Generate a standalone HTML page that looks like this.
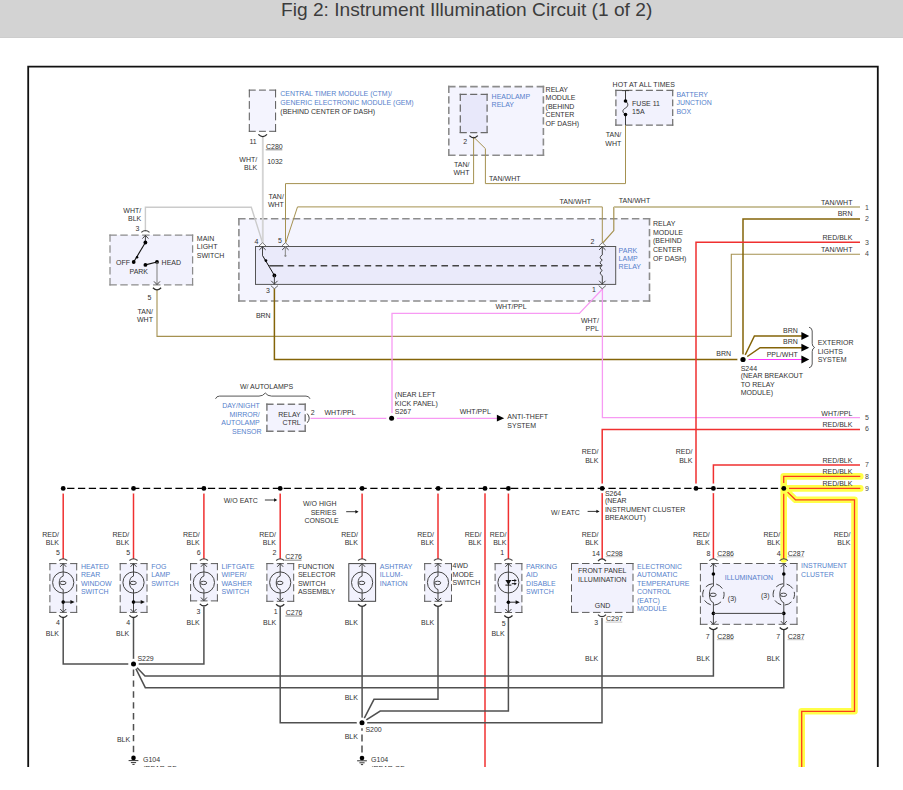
<!DOCTYPE html>
<html><head><meta charset="utf-8"><title>Fig 2</title>
<style>
html,body{margin:0;padding:0;background:#fff;}
body{width:903px;height:790px;overflow:hidden;position:relative;font-family:"Liberation Sans",sans-serif;}
#hdr{position:absolute;left:0;top:0;width:903px;height:36.6px;background:#d3d3d3;border-bottom:1px solid #cdcdcd;}
#ttl{position:absolute;left:281px;top:-2.6px;font-size:19.15px;line-height:26px;color:#3c3c3c;white-space:nowrap;}
#dia{position:absolute;left:0;top:0;width:903px;height:767px;overflow:hidden;}
svg text{font-family:"Liberation Sans",sans-serif;font-size:7.0px;}
</style></head><body>
<div id="hdr"></div><div id="ttl">Fig 2: Instrument Illumination Circuit (1 of 2)</div>
<div id="dia"><svg width="903" height="790" viewBox="0 0 903 790">
<path d="M28.2,767 V66.6 H877.8 V767" fill="none" stroke="#111" stroke-width="1.8"/>
<rect x="249.3" y="90.1" width="26.3" height="41.2" fill="#f4f4fe"/>
<path d="M248.8,90.1 L276.1,90.1" stroke="#585858" stroke-width="1.0" fill="none" stroke-dasharray="6.941 3.239"/>
<path d="M248.8,131.3 L276.1,131.3" stroke="#585858" stroke-width="1.0" fill="none" stroke-dasharray="6.941 3.239"/>
<path d="M249.3,89.6 L249.3,131.8" stroke="#585858" stroke-width="1.0" fill="none" stroke-dasharray="7.815 3.647"/>
<path d="M275.6,89.6 L275.6,131.8" stroke="#585858" stroke-width="1.0" fill="none" stroke-dasharray="7.815 3.647"/>
<rect x="448.8" y="86.6" width="94.6" height="68.7" fill="#f4f4fe"/>
<path d="M448.0,86.6 L544.2,86.6" stroke="#8c8c8c" stroke-width="1.6" fill="none" stroke-dasharray="7.555 3.526"/>
<path d="M448.0,155.3 L544.2,155.3" stroke="#8c8c8c" stroke-width="1.6" fill="none" stroke-dasharray="7.555 3.526"/>
<path d="M448.8,85.8 L448.8,156.1" stroke="#8c8c8c" stroke-width="1.6" fill="none" stroke-dasharray="7.173 3.348"/>
<path d="M543.4,85.8 L543.4,156.1" stroke="#8c8c8c" stroke-width="1.6" fill="none" stroke-dasharray="7.173 3.348"/>
<rect x="460.3" y="94.4" width="26.8" height="38.1" fill="#e8e8fa"/>
<path d="M459.68,94.4 L487.73,94.4" stroke="#6a6a6a" stroke-width="1.25" fill="none" stroke-dasharray="7.131 3.328"/>
<path d="M459.68,132.5 L487.73,132.5" stroke="#6a6a6a" stroke-width="1.25" fill="none" stroke-dasharray="7.131 3.328"/>
<path d="M460.3,93.78 L460.3,133.12" stroke="#6a6a6a" stroke-width="1.25" fill="none" stroke-dasharray="7.287 3.401"/>
<path d="M487.1,93.78 L487.1,133.12" stroke="#6a6a6a" stroke-width="1.25" fill="none" stroke-dasharray="7.287 3.401"/>
<rect x="615.9" y="90.3" width="56.8" height="34.9" fill="#f2f2fd"/>
<path d="M615.27,90.3 L673.33,90.3" stroke="#707070" stroke-width="1.25" fill="none" stroke-dasharray="6.966 3.251"/>
<path d="M615.27,125.2 L673.33,125.2" stroke="#707070" stroke-width="1.25" fill="none" stroke-dasharray="6.966 3.251"/>
<path d="M615.9,89.67 L615.9,125.83" stroke="#707070" stroke-width="1.25" fill="none" stroke-dasharray="6.694 3.124"/>
<path d="M672.7,89.67 L672.7,125.83" stroke="#707070" stroke-width="1.25" fill="none" stroke-dasharray="6.694 3.124"/>
<rect x="110" y="235" width="82.6" height="49.8" fill="#f2f2fd"/>
<path d="M109.38,235 L193.22,235" stroke="#8c8c8c" stroke-width="1.25" fill="none" stroke-dasharray="7.442 3.473"/>
<path d="M109.38,284.8 L193.22,284.8" stroke="#8c8c8c" stroke-width="1.25" fill="none" stroke-dasharray="7.442 3.473"/>
<path d="M110,234.38 L110,285.43" stroke="#8c8c8c" stroke-width="1.25" fill="none" stroke-dasharray="7.434 3.469"/>
<path d="M192.6,234.38 L192.6,285.43" stroke="#8c8c8c" stroke-width="1.25" fill="none" stroke-dasharray="7.434 3.469"/>
<rect x="238.9" y="218.8" width="410.6" height="82.2" fill="#f4f4fe"/>
<path d="M238.1,218.8 L650.3,218.8" stroke="#8c8c8c" stroke-width="1.6" fill="none" stroke-dasharray="7.458 3.481"/>
<path d="M238.1,301 L650.3,301" stroke="#8c8c8c" stroke-width="1.6" fill="none" stroke-dasharray="7.458 3.481"/>
<path d="M238.9,218.0 L238.9,301.8" stroke="#8c8c8c" stroke-width="1.6" fill="none" stroke-dasharray="7.438 3.471"/>
<path d="M649.5,218.0 L649.5,301.8" stroke="#8c8c8c" stroke-width="1.6" fill="none" stroke-dasharray="7.438 3.471"/>
<rect x="255.5" y="246.5" width="360.2" height="37.9" fill="#eaeafa" stroke="#555" stroke-width="1.0"/>
<rect x="266.9" y="404.3" width="38.3" height="27.0" fill="#f3f3fe"/>
<path d="M266.17,404.3 L305.93,404.3" stroke="#7a7a7a" stroke-width="1.45" fill="none" stroke-dasharray="7.361 3.435"/>
<path d="M266.17,431.3 L305.93,431.3" stroke="#7a7a7a" stroke-width="1.45" fill="none" stroke-dasharray="7.361 3.435"/>
<path d="M266.9,403.57 L266.9,432.03" stroke="#7a7a7a" stroke-width="1.45" fill="none" stroke-dasharray="7.233 3.375"/>
<path d="M305.2,403.57 L305.2,432.03" stroke="#7a7a7a" stroke-width="1.45" fill="none" stroke-dasharray="7.233 3.375"/>
<rect x="571.5" y="563.5" width="61.5" height="48.9" fill="#f2f2fd"/>
<path d="M571.0,563.5 L633.5,563.5" stroke="#5c5c5c" stroke-width="1.0" fill="none" stroke-dasharray="7.5 3.5"/>
<path d="M571.0,612.4 L633.5,612.4" stroke="#5c5c5c" stroke-width="1.0" fill="none" stroke-dasharray="7.5 3.5"/>
<path d="M571.5,563.0 L571.5,612.9" stroke="#5c5c5c" stroke-width="1.0" fill="none" stroke-dasharray="7.267 3.391"/>
<path d="M633,563.0 L633,612.9" stroke="#5c5c5c" stroke-width="1.0" fill="none" stroke-dasharray="7.267 3.391"/>
<rect x="700.4" y="563.5" width="96.6" height="60.8" fill="#f2f2fd"/>
<path d="M699.9,563.5 L797.5,563.5" stroke="#5c5c5c" stroke-width="1.0" fill="none" stroke-dasharray="7.665 3.577"/>
<path d="M699.9,624.3 L797.5,624.3" stroke="#5c5c5c" stroke-width="1.0" fill="none" stroke-dasharray="7.665 3.577"/>
<path d="M700.4,563.0 L700.4,624.8" stroke="#5c5c5c" stroke-width="1.0" fill="none" stroke-dasharray="7.416 3.461"/>
<path d="M797,563.0 L797,624.8" stroke="#5c5c5c" stroke-width="1.0" fill="none" stroke-dasharray="7.416 3.461"/>
<path d="M145.4,232 V207.3 H251.3 L262.8,243.5" stroke="#cbcbcb" stroke-width="1.4" fill="none" />
<path d="M262.8,136 V243.5" stroke="#d4d4d4" stroke-width="1.9" fill="none" />
<path d="M285.5,243.5 V183.6 H473.6 V137" stroke="#a59150" stroke-width="1.0" fill="none" />
<path d="M473.6,137 L485.4,148.6 V183.6 H625.5 V125.2" stroke="#a59150" stroke-width="1.0" fill="none" />
<path d="M285.5,243.5 L297.5,206.9 H602.3 V243.5" stroke="#a59150" stroke-width="1.0" fill="none" />
<path d="M602.3,243.5 L613.8,230.6 V206.9" stroke="#a59150" stroke-width="1.2" fill="none" />
<path d="M613.8,206.9 H860" stroke="#cac29d" stroke-width="2.0" fill="none" />
<path d="M157,290 V336.4 H731.3 V254.3 H860" stroke="#a59150" stroke-width="1.1" fill="none" />
<path d="M274.4,288.5 V359.5 H737.5" stroke="#846408" stroke-width="1.5" fill="none" />
<path d="M743,359 V219 H860" stroke="#846408" stroke-width="1.5" fill="none" />
<path d="M743,359.5 L754.4,336 H802" stroke="#846408" stroke-width="1.5" fill="none" />
<path d="M743,359.5 L760.1,347.7 H802" stroke="#846408" stroke-width="1.5" fill="none" />
<path d="M602.4,288.5 V417.6 H860" stroke="#f79af3" stroke-width="1.3" fill="none" />
<path d="M602.4,289 L579.4,313.4 H392 V413.5" stroke="#f79af3" stroke-width="1.3" fill="none" />
<path d="M310.5,418.3 H387.5 M396,418.3 H497.5" stroke="#f79af3" stroke-width="1.3" fill="none" />
<path d="M748.4,359.5 H802" stroke="#ff38ff" stroke-width="1.2" fill="none" />
<path d="M860,242.3 H696 V488" stroke="#f03030" stroke-width="1.5" fill="none" />
<path d="M860,429.5 H602.2 V559" stroke="#f03030" stroke-width="1.5" fill="none" />
<path d="M860,465 H713.4 V559" stroke="#f03030" stroke-width="1.5" fill="none" />
<path d="M63.2,493.4 V559.2" stroke="#f03030" stroke-width="1.5" fill="none" />
<path d="M133.5,493.4 V559.2" stroke="#f03030" stroke-width="1.5" fill="none" />
<path d="M203.9,493.4 V559.2" stroke="#f03030" stroke-width="1.5" fill="none" />
<path d="M280.2,493.4 V559.2" stroke="#f03030" stroke-width="1.5" fill="none" />
<path d="M362.1,493.4 V559.2" stroke="#f03030" stroke-width="1.5" fill="none" />
<path d="M438,493.4 V559.2" stroke="#f03030" stroke-width="1.5" fill="none" />
<path d="M508.4,493.4 V559.2" stroke="#f03030" stroke-width="1.5" fill="none" />
<path d="M485,493.2 V767" stroke="#f03030" stroke-width="1.5" fill="none" />
<path d="M63.2,618 V663.9 H203.9 V607" stroke="#505050" stroke-width="1.5" fill="none" />
<path d="M133.5,618 V663.9" stroke="#505050" stroke-width="1.5" fill="none" />
<path d="M133.5,663.9 L145,676 H713.4 V630" stroke="#505050" stroke-width="1.5" fill="none" />
<path d="M133.5,663.9 L145.3,687.7 H783.8 V630" stroke="#505050" stroke-width="1.5" fill="none" />
<path d="M280.2,607 V722.7 H602 V618" stroke="#505050" stroke-width="1.5" fill="none" />
<path d="M362.1,607 V722.7" stroke="#505050" stroke-width="1.5" fill="none" />
<path d="M362,722.7 L374,699.3 H438 V607" stroke="#505050" stroke-width="1.5" fill="none" />
<path d="M362,722.7 L380.2,711.1 H508.4 V618" stroke="#505050" stroke-width="1.5" fill="none" />
<circle cx="63.2" cy="488.4" r="4.9" fill="#fff"/>
<circle cx="133.5" cy="488.4" r="4.9" fill="#fff"/>
<circle cx="203.9" cy="488.4" r="4.9" fill="#fff"/>
<circle cx="280.2" cy="488.4" r="4.9" fill="#fff"/>
<circle cx="362.1" cy="488.4" r="4.9" fill="#fff"/>
<circle cx="438.2" cy="488.4" r="4.9" fill="#fff"/>
<circle cx="485" cy="488.4" r="4.9" fill="#fff"/>
<circle cx="508.4" cy="488.4" r="4.9" fill="#fff"/>
<circle cx="602.2" cy="488.4" r="4.9" fill="#fff"/>
<circle cx="696" cy="488.4" r="4.9" fill="#fff"/>
<circle cx="713.4" cy="488.4" r="4.9" fill="#fff"/>
<circle cx="783.8" cy="488.4" r="4.9" fill="#fff"/>
<circle cx="743" cy="359.5" r="5.3" fill="#fff"/>
<circle cx="391.6" cy="418.3" r="5.3" fill="#fff"/>
<circle cx="133.5" cy="664" r="5.3" fill="#fff"/>
<circle cx="362" cy="722.7" r="5.3" fill="#fff"/>
<path d="M133.5,669.5 V752.6" stroke="#505050" stroke-width="1.5" fill="none" stroke-dasharray="6.4 4.5"/>
<path d="M362,728.2 V730.8 M362,734.4 V741.5 M362,745.4 V752.5" stroke="#505050" stroke-width="1.5" fill="none" />
<path d="M860.3,476.4 H783.7 V559.5 M860.3,488.4 H783.8 L795.5,499.8 H854.5 V711.3 H801.7 V767" stroke="#ffff48" stroke-width="6.6" fill="none" stroke-linejoin="round" stroke-linecap="round"/>
<path d="M860.3,476.4 H783.7 V483 M783.7,493.8 V559 M789,488.4 H860.3 M787.6,492.1 L795.5,499.8 H854.5 V711.3 H801.7 V767" stroke="#fa3c1e" stroke-width="1.3" fill="none" />
<path d="M63.2,488.4 H783.8" stroke="#000" stroke-width="1.3" fill="none" stroke-dasharray="7.3 3.526" stroke-dashoffset="6.9"/>
<circle cx="63.2" cy="488.4" r="2.4" fill="#000"/>
<circle cx="133.5" cy="488.4" r="2.4" fill="#000"/>
<circle cx="203.9" cy="488.4" r="2.4" fill="#000"/>
<circle cx="280.2" cy="488.4" r="2.4" fill="#000"/>
<circle cx="362.1" cy="488.4" r="2.4" fill="#000"/>
<circle cx="438.2" cy="488.4" r="2.4" fill="#000"/>
<circle cx="485" cy="488.4" r="2.4" fill="#000"/>
<circle cx="508.4" cy="488.4" r="2.4" fill="#000"/>
<circle cx="602.2" cy="488.4" r="2.4" fill="#000"/>
<circle cx="696" cy="488.4" r="2.4" fill="#000"/>
<circle cx="713.4" cy="488.4" r="2.4" fill="#000"/>
<circle cx="783.8" cy="488.4" r="2.4" fill="#000"/>
<rect x="49.9" y="563.6" width="26.8" height="48.8" fill="#f2f2fd"/>
<path d="M49.4,563.6 L77.2,563.6" stroke="#5c5c5c" stroke-width="1.0" fill="none" stroke-dasharray="7.068 3.298"/>
<path d="M49.4,612.4 L77.2,612.4" stroke="#5c5c5c" stroke-width="1.0" fill="none" stroke-dasharray="7.068 3.298"/>
<path d="M49.9,563.1 L49.9,612.9" stroke="#5c5c5c" stroke-width="1.0" fill="none" stroke-dasharray="7.252 3.384"/>
<path d="M76.7,563.1 L76.7,612.9" stroke="#5c5c5c" stroke-width="1.0" fill="none" stroke-dasharray="7.252 3.384"/>
<path d="M63.2,563.2 V576.1 M63.2,589.5 V612.4" stroke="#444" stroke-width="1" fill="none" />
<circle cx="63.2" cy="582.5" r="10.6" fill="none" stroke="#444" stroke-width="1"/>
<path d="M63.2,576.1 C57.900000000000006,576.9 57.900000000000006,588.7 63.2,589.5" stroke="#444" stroke-width="1" fill="none" />
<ellipse cx="62.900000000000006" cy="582.9" rx="3.1" ry="1.7" fill="none" stroke="#444" stroke-width="1"/>
<path d="M59.1,560.5 Q63.2,556.9000000000001 67.3,560.5" stroke="#4a4a4a" stroke-width="1.1" fill="none" />
<path d="M60.2,566.8000000000001 L63.2,563.6 L66.2,566.8000000000001" stroke="#444" stroke-width="1" fill="none" />
<path d="M59.1,615.4 Q63.2,619.6 67.3,615.4" stroke="#2a2a2a" stroke-width="1.3" fill="none" />
<path d="M60.2,609.0 L63.2,612.1999999999999 L66.2,609.0" stroke="#444" stroke-width="1" fill="none" />
<circle cx="63.2" cy="602.1" r="1.8" fill="#000"/>
<path d="M63.2,602.1 H71.2" stroke="#222" stroke-width="0.9" fill="none" />
<path d="M70.4,600.1 L74.60000000000001,602.1 L70.4,604.1 Z" fill="#111"/>
<rect x="120.2" y="563.6" width="26.8" height="48.8" fill="#f2f2fd"/>
<path d="M119.7,563.6 L147.5,563.6" stroke="#5c5c5c" stroke-width="1.0" fill="none" stroke-dasharray="7.068 3.298"/>
<path d="M119.7,612.4 L147.5,612.4" stroke="#5c5c5c" stroke-width="1.0" fill="none" stroke-dasharray="7.068 3.298"/>
<path d="M120.2,563.1 L120.2,612.9" stroke="#5c5c5c" stroke-width="1.0" fill="none" stroke-dasharray="7.252 3.384"/>
<path d="M147.0,563.1 L147.0,612.9" stroke="#5c5c5c" stroke-width="1.0" fill="none" stroke-dasharray="7.252 3.384"/>
<path d="M133.5,563.2 V576.1 M133.5,589.5 V612.4" stroke="#444" stroke-width="1" fill="none" />
<circle cx="133.5" cy="582.5" r="10.6" fill="none" stroke="#444" stroke-width="1"/>
<path d="M133.5,576.1 C128.2,576.9 128.2,588.7 133.5,589.5" stroke="#444" stroke-width="1" fill="none" />
<ellipse cx="133.2" cy="582.9" rx="3.1" ry="1.7" fill="none" stroke="#444" stroke-width="1"/>
<path d="M129.4,560.5 Q133.5,556.9000000000001 137.6,560.5" stroke="#4a4a4a" stroke-width="1.1" fill="none" />
<path d="M130.5,566.8000000000001 L133.5,563.6 L136.5,566.8000000000001" stroke="#444" stroke-width="1" fill="none" />
<path d="M129.4,615.4 Q133.5,619.6 137.6,615.4" stroke="#2a2a2a" stroke-width="1.3" fill="none" />
<path d="M130.5,609.0 L133.5,612.1999999999999 L136.5,609.0" stroke="#444" stroke-width="1" fill="none" />
<circle cx="133.5" cy="602.1" r="1.8" fill="#000"/>
<path d="M133.5,602.1 H141.5" stroke="#222" stroke-width="0.9" fill="none" />
<path d="M140.7,600.1 L144.9,602.1 L140.7,604.1 Z" fill="#111"/>
<rect x="190.6" y="563.6" width="26.8" height="37.3" fill="#f2f2fd"/>
<path d="M190.1,563.6 L217.9,563.6" stroke="#5c5c5c" stroke-width="1.0" fill="none" stroke-dasharray="7.068 3.298"/>
<path d="M190.1,600.9 L217.9,600.9" stroke="#5c5c5c" stroke-width="1.0" fill="none" stroke-dasharray="7.068 3.298"/>
<path d="M190.6,563.1 L190.6,601.4" stroke="#5c5c5c" stroke-width="1.0" fill="none" stroke-dasharray="7.093 3.31"/>
<path d="M217.4,563.1 L217.4,601.4" stroke="#5c5c5c" stroke-width="1.0" fill="none" stroke-dasharray="7.093 3.31"/>
<path d="M203.9,563.2 V576.1 M203.9,589.5 V600.9" stroke="#444" stroke-width="1" fill="none" />
<circle cx="203.9" cy="582.5" r="10.6" fill="none" stroke="#444" stroke-width="1"/>
<path d="M203.9,576.1 C198.6,576.9 198.6,588.7 203.9,589.5" stroke="#444" stroke-width="1" fill="none" />
<ellipse cx="203.6" cy="582.9" rx="3.1" ry="1.7" fill="none" stroke="#444" stroke-width="1"/>
<path d="M199.8,560.5 Q203.9,556.9000000000001 208.0,560.5" stroke="#4a4a4a" stroke-width="1.1" fill="none" />
<path d="M200.9,566.8000000000001 L203.9,563.6 L206.9,566.8000000000001" stroke="#444" stroke-width="1" fill="none" />
<path d="M199.8,603.9 Q203.9,608.1 208.0,603.9" stroke="#2a2a2a" stroke-width="1.3" fill="none" />
<path d="M200.9,597.5 L203.9,600.6999999999999 L206.9,597.5" stroke="#444" stroke-width="1" fill="none" />
<rect x="266.9" y="563.6" width="26.8" height="37.7" fill="#f2f2fd"/>
<path d="M266.4,563.6 L294.2,563.6" stroke="#5c5c5c" stroke-width="1.0" fill="none" stroke-dasharray="7.068 3.298"/>
<path d="M266.4,601.3 L294.2,601.3" stroke="#5c5c5c" stroke-width="1.0" fill="none" stroke-dasharray="7.068 3.298"/>
<path d="M266.9,563.1 L266.9,601.8" stroke="#5c5c5c" stroke-width="1.0" fill="none" stroke-dasharray="7.167 3.344"/>
<path d="M293.7,563.1 L293.7,601.8" stroke="#5c5c5c" stroke-width="1.0" fill="none" stroke-dasharray="7.167 3.344"/>
<path d="M280.2,563.2 V576.1 M280.2,589.5 V601.3" stroke="#444" stroke-width="1" fill="none" />
<circle cx="280.2" cy="582.5" r="10.6" fill="none" stroke="#444" stroke-width="1"/>
<path d="M280.2,576.1 C274.9,576.9 274.9,588.7 280.2,589.5" stroke="#444" stroke-width="1" fill="none" />
<ellipse cx="279.9" cy="582.9" rx="3.1" ry="1.7" fill="none" stroke="#444" stroke-width="1"/>
<path d="M276.09999999999997,560.5 Q280.2,556.9000000000001 284.3,560.5" stroke="#4a4a4a" stroke-width="1.1" fill="none" />
<path d="M277.2,566.8000000000001 L280.2,563.6 L283.2,566.8000000000001" stroke="#444" stroke-width="1" fill="none" />
<path d="M276.09999999999997,604.3 Q280.2,608.5 284.3,604.3" stroke="#2a2a2a" stroke-width="1.3" fill="none" />
<path d="M277.2,597.9 L280.2,601.0999999999999 L283.2,597.9" stroke="#444" stroke-width="1" fill="none" />
<rect x="348.8" y="563.6" width="26.8" height="37.7" fill="#f2f2fd" stroke="#444" stroke-width="1.0"/>
<path d="M362.1,563.2 V576.1 M362.1,589.5 V601.3" stroke="#444" stroke-width="1" fill="none" />
<circle cx="362.1" cy="582.5" r="10.6" fill="none" stroke="#444" stroke-width="1"/>
<path d="M362.1,576.1 C356.8,576.9 356.8,588.7 362.1,589.5" stroke="#444" stroke-width="1" fill="none" />
<ellipse cx="361.8" cy="582.9" rx="3.1" ry="1.7" fill="none" stroke="#444" stroke-width="1"/>
<path d="M358.0,560.5 Q362.1,556.9000000000001 366.20000000000005,560.5" stroke="#4a4a4a" stroke-width="1.1" fill="none" />
<path d="M359.1,566.8000000000001 L362.1,563.6 L365.1,566.8000000000001" stroke="#444" stroke-width="1" fill="none" />
<path d="M358.0,604.3 Q362.1,608.5 366.20000000000005,604.3" stroke="#2a2a2a" stroke-width="1.3" fill="none" />
<path d="M359.1,597.9 L362.1,601.0999999999999 L365.1,597.9" stroke="#444" stroke-width="1" fill="none" />
<rect x="424.7" y="563.6" width="26.8" height="37.7" fill="#f2f2fd"/>
<path d="M424.2,563.6 L452.0,563.6" stroke="#5c5c5c" stroke-width="1.0" fill="none" stroke-dasharray="7.068 3.298"/>
<path d="M424.2,601.3 L452.0,601.3" stroke="#5c5c5c" stroke-width="1.0" fill="none" stroke-dasharray="7.068 3.298"/>
<path d="M424.7,563.1 L424.7,601.8" stroke="#5c5c5c" stroke-width="1.0" fill="none" stroke-dasharray="7.167 3.344"/>
<path d="M451.5,563.1 L451.5,601.8" stroke="#5c5c5c" stroke-width="1.0" fill="none" stroke-dasharray="7.167 3.344"/>
<path d="M438,563.2 V576.1 M438,589.5 V601.3" stroke="#444" stroke-width="1" fill="none" />
<circle cx="438" cy="582.5" r="10.6" fill="none" stroke="#444" stroke-width="1"/>
<path d="M438,576.1 C432.7,576.9 432.7,588.7 438,589.5" stroke="#444" stroke-width="1" fill="none" />
<ellipse cx="437.7" cy="582.9" rx="3.1" ry="1.7" fill="none" stroke="#444" stroke-width="1"/>
<path d="M433.9,560.5 Q438,556.9000000000001 442.1,560.5" stroke="#4a4a4a" stroke-width="1.1" fill="none" />
<path d="M435,566.8000000000001 L438,563.6 L441,566.8000000000001" stroke="#444" stroke-width="1" fill="none" />
<path d="M433.9,604.3 Q438,608.5 442.1,604.3" stroke="#2a2a2a" stroke-width="1.3" fill="none" />
<path d="M435,597.9 L438,601.0999999999999 L441,597.9" stroke="#444" stroke-width="1" fill="none" />
<rect x="495.1" y="563.6" width="26.8" height="48.9" fill="#f2f2fd"/>
<path d="M494.6,563.6 L522.4,563.6" stroke="#5c5c5c" stroke-width="1.0" fill="none" stroke-dasharray="7.068 3.298"/>
<path d="M494.6,612.5 L522.4,612.5" stroke="#5c5c5c" stroke-width="1.0" fill="none" stroke-dasharray="7.068 3.298"/>
<path d="M495.1,563.1 L495.1,613.0" stroke="#5c5c5c" stroke-width="1.0" fill="none" stroke-dasharray="7.267 3.391"/>
<path d="M521.9,563.1 L521.9,613.0" stroke="#5c5c5c" stroke-width="1.0" fill="none" stroke-dasharray="7.267 3.391"/>
<path d="M508.4,563.2 V612.5" stroke="#444" stroke-width="1" fill="none" />
<circle cx="508.4" cy="582.5" r="10.5" fill="none" stroke="#444" stroke-width="1"/>
<path d="M505.4,580.1 H511.4 L508.4,584.9 Z" fill="#111"/>
<path d="M505.4,585.1 H511.4" stroke="#111" stroke-width="1" fill="none" />
<path d="M511.79999999999995,580.5 H515.4" stroke="#111" stroke-width="1" fill="none" />
<path d="M514.4,579.0 L516.8,580.5 L514.4,582.0 Z" fill="#111"/>
<path d="M511.79999999999995,583.7 H515.4" stroke="#111" stroke-width="1" fill="none" />
<path d="M514.4,582.2 L516.8,583.7 L514.4,585.2 Z" fill="#111"/>
<path d="M504.29999999999995,560.5 Q508.4,556.9000000000001 512.5,560.5" stroke="#4a4a4a" stroke-width="1.1" fill="none" />
<path d="M505.4,566.8000000000001 L508.4,563.6 L511.4,566.8000000000001" stroke="#444" stroke-width="1" fill="none" />
<path d="M504.29999999999995,615.5 Q508.4,619.7 512.5,615.5" stroke="#2a2a2a" stroke-width="1.3" fill="none" />
<path d="M505.4,609.1 L508.4,612.3 L511.4,609.1" stroke="#444" stroke-width="1" fill="none" />
<circle cx="508.4" cy="602.2" r="1.8" fill="#000"/>
<path d="M508.4,602.2 H516.4" stroke="#222" stroke-width="0.9" fill="none" />
<path d="M515.6,600.2 L519.8,602.2 L515.6,604.2 Z" fill="#111"/>
<path d="M598,561 Q602,556.8 606,561" stroke="#383838" stroke-width="1.15" fill="none" />
<path d="M598,614.6 Q602,618.8 606,614.6" stroke="#383838" stroke-width="1.15" fill="none" />
<path d="M713.4,563.5 V586.2 M713.4,602.6 V624.3" stroke="#444" stroke-width="1" fill="none" />
<path d="M709.3,560.5999999999999 Q713.4,557.0 717.5,560.5999999999999" stroke="#4a4a4a" stroke-width="1.1" fill="none" />
<path d="M710.4,566.9 L713.4,563.6999999999999 L716.4,566.9" stroke="#444" stroke-width="1" fill="none" />
<path d="M709.3,627.5 Q713.4,631.7 717.5,627.5" stroke="#2a2a2a" stroke-width="1.3" fill="none" />
<path d="M710.4,621.1 L713.4,624.3 L716.4,621.1" stroke="#444" stroke-width="1" fill="none" />
<circle cx="713.4" cy="574" r="1.8" fill="#000"/>
<circle cx="713.4" cy="613.4" r="1.8" fill="#000"/>
<circle cx="713.4" cy="594.4" r="10.7" fill="none" stroke="#444" stroke-width="1" stroke-dasharray="7.6 3.6" stroke-dashoffset="3"/>
<path d="M713.4,586.1999999999999 C708.1,586.9999999999999 708.1,601.8000000000001 713.4,602.6" stroke="#444" stroke-width="1" fill="none" />
<ellipse cx="713.1" cy="594.8" rx="3.1" ry="1.7" fill="none" stroke="#444" stroke-width="1"/>
<path d="M783.8,563.5 V586.2 M783.8,602.6 V624.3" stroke="#444" stroke-width="1" fill="none" />
<path d="M779.6999999999999,560.5999999999999 Q783.8,557.0 787.9,560.5999999999999" stroke="#4a4a4a" stroke-width="1.1" fill="none" />
<path d="M780.8,566.9 L783.8,563.6999999999999 L786.8,566.9" stroke="#444" stroke-width="1" fill="none" />
<path d="M779.6999999999999,627.5 Q783.8,631.7 787.9,627.5" stroke="#2a2a2a" stroke-width="1.3" fill="none" />
<path d="M780.8,621.1 L783.8,624.3 L786.8,621.1" stroke="#444" stroke-width="1" fill="none" />
<circle cx="783.8" cy="574" r="1.8" fill="#000"/>
<circle cx="783.8" cy="613.4" r="1.8" fill="#000"/>
<circle cx="783.8" cy="594.4" r="10.7" fill="none" stroke="#444" stroke-width="1" stroke-dasharray="7.6 3.6" stroke-dashoffset="3"/>
<path d="M783.8,586.1999999999999 C778.5,586.9999999999999 778.5,601.8000000000001 783.8,602.6" stroke="#444" stroke-width="1" fill="none" />
<ellipse cx="783.5" cy="594.8" rx="3.1" ry="1.7" fill="none" stroke="#444" stroke-width="1"/>
<path d="M713.4,613.4 H783.8" stroke="#444" stroke-width="1" fill="none" />
<path d="M141.3,232.3 Q145.4,228.7 149.5,232.3" stroke="#4a4a4a" stroke-width="1.1" fill="none" />
<path d="M142.4,238.6 L145.4,235.4 L148.4,238.6" stroke="#444" stroke-width="1" fill="none" />
<path d="M145.4,235 V242.5" stroke="#444" stroke-width="1" fill="none" />
<path d="M145.4,242.5 L133.7,262" stroke="#111" stroke-width="1.1" fill="none" />
<circle cx="145.4" cy="242.5" r="1.9" fill="#000"/>
<circle cx="133.7" cy="262" r="1.9" fill="#000"/>
<circle cx="137.1" cy="257.2" r="1.2" fill="#000"/>
<path d="M145.4,264.9 L157,262" stroke="#111" stroke-width="1.1" fill="none" />
<circle cx="145.4" cy="264.9" r="1.9" fill="#000"/>
<circle cx="157" cy="262" r="1.9" fill="#000"/>
<path d="M157,262 V284.8" stroke="#888" stroke-width="1.1" fill="none" />
<path d="M152.9,287.8 Q157,292.0 161.1,287.8" stroke="#2a2a2a" stroke-width="1.3" fill="none" />
<path d="M154,281.40000000000003 L157,284.6 L160,281.40000000000003" stroke="#444" stroke-width="1" fill="none" />
<path d="M258.4,134.4 Q262.8,138.8 267,134.4" stroke="#2a2a2a" stroke-width="1.3" fill="none" />
<path d="M469.4,135.6 Q473.6,140 477.8,135.6" stroke="#2a2a2a" stroke-width="1.3" fill="none" />
<path d="M258.9,246.1 L262.5,242.7 L266.1,246.1" fill="#fff" stroke="#777" stroke-width="1"/>
<path d="M259.3,249.9 L262.5,246.8 L265.7,249.9" stroke="#444" stroke-width="1" fill="none" />
<path d="M262.5,246.5 V255.5" stroke="#444" stroke-width="1" fill="none" />
<path d="M281.79999999999995,246.1 L285.4,242.7 L289.0,246.1" fill="#fff" stroke="#777" stroke-width="1"/>
<path d="M282.2,249.9 L285.4,246.8 L288.59999999999997,249.9" stroke="#444" stroke-width="1" fill="none" />
<path d="M285.4,246.5 V255.2" stroke="#999" stroke-width="1.2" fill="none" />
<circle cx="285.4" cy="255.8" r="1.1" fill="#888"/>
<path d="M262.5,255.5 L274.4,275.4" stroke="#111" stroke-width="1.0" fill="none" />
<circle cx="265.9" cy="260.6" r="1.4" fill="#000"/>
<circle cx="274.4" cy="275.5" r="1.9" fill="#000"/>
<path d="M274.4,275.5 V284.4" stroke="#444" stroke-width="1" fill="none" />
<path d="M270.79999999999995,285.59999999999997 L274.4,288.79999999999995 L278.0,285.59999999999997" fill="none" stroke="#666" stroke-width="1"/>
<path d="M271.2,280.79999999999995 L274.4,284.0 L277.59999999999997,280.79999999999995" stroke="#444" stroke-width="1" fill="none" />
<path d="M269.2,265.8 H283.3" stroke="#444" stroke-width="1.5" fill="none" />
<path d="M287.7,265.8 H602.3" stroke="#444" stroke-width="1.5" fill="none" stroke-dasharray="6.6 4.38"/>
<path d="M598.6999999999999,246.1 L602.3,242.7 L605.9,246.1" fill="#fff" stroke="#777" stroke-width="1"/>
<path d="M599.0999999999999,249.9 L602.3,246.8 L605.5,249.9" stroke="#444" stroke-width="1" fill="none" />
<path d="M598.6999999999999,285.59999999999997 L602.3,288.79999999999995 L605.9,285.59999999999997" fill="none" stroke="#666" stroke-width="1"/>
<path d="M599.0999999999999,280.79999999999995 L602.3,284.0 L605.5,280.79999999999995" stroke="#444" stroke-width="1" fill="none" />
<path d="M602.3,246.5 V254.9 q-4.2,2.6 0,5.2 q-4.2,2.6 0,5.2 q-4.2,2.6 0,5.2 q-4.2,2.6 0,5.2 V284.4" stroke="#444" stroke-width="1" fill="none" />
<path d="M622,90.6 H629 M625.5,90.3 V101 M625.5,114.6 V125.2" stroke="#3c3c3c" stroke-width="1.0" fill="none" />
<path d="M625.5,101 C629.5,104 627.5,107 625.5,108 C622,110 622,112 625.5,114.6" stroke="#3c3c3c" stroke-width="1.0" fill="none" />
<circle cx="625.5" cy="101" r="1.8" fill="#000"/>
<circle cx="625.5" cy="114.6" r="1.8" fill="#000"/>
<path d="M307.2,413.6 Q311.2,418.2 307.2,422.8" stroke="#444" stroke-width="1" fill="none" />
<circle cx="743" cy="359.5" r="2.6" fill="#000"/>
<circle cx="391.6" cy="418.3" r="2.5" fill="#000"/>
<circle cx="133.5" cy="664" r="2.5" fill="#000"/>
<circle cx="362" cy="722.7" r="2.5" fill="#000"/>
<path d="M801.4,332.1 L809.2,336 L801.4,339.9 Z" fill="#000"/>
<path d="M801.4,343.8 L809.2,347.7 L801.4,351.59999999999997 Z" fill="#000"/>
<path d="M801.4,355.6 L809.2,359.5 L801.4,363.4 Z" fill="#000"/>
<path d="M496.9,414.8 L504.2,418.2 L496.9,421.59999999999997 Z" fill="#000"/>
<path d="M264.9,500 H275.3" stroke="#222" stroke-width="0.9" fill="none" />
<path d="M274.1,498.3 L277.3,500 L274.1,501.7 Z" fill="#111"/>
<path d="M346.2,511.7 H356.6" stroke="#222" stroke-width="0.9" fill="none" />
<path d="M355.40000000000003,510.0 L358.6,511.7 L355.40000000000003,513.4 Z" fill="#111"/>
<path d="M587.6,511.4 H597.6" stroke="#222" stroke-width="0.9" fill="none" />
<path d="M596.4,509.7 L599.6,511.4 L596.4,513.1 Z" fill="#111"/>
<path d="M809,327.2 Q812.2,328 812.2,331 V343.5 Q812.2,346.5 814.6,347.5 Q812.2,348.5 812.2,351.5 V364 Q812.2,367 809,367.8" stroke="#444" stroke-width="0.9" fill="none" />
<path d="M215.5,398.8 Q216.5,396.1 219.5,396.1 H259 Q263,396.1 265.3,393 Q267.6,396.1 271.6,396.1 H306 Q309,396.1 310,398.8" stroke="#444" stroke-width="0.9" fill="none" />
<circle cx="133.5" cy="757.9" r="2.3" fill="#000"/>
<path d="M128.6,760.6 H138.4 M130.9,762.6 H136.1 M132.4,764.4 H134.6" stroke="#333" stroke-width="1" fill="none" />
<circle cx="362" cy="758.1" r="2.3" fill="#000"/>
<path d="M357.1,760.8000000000001 H366.9 M359.4,762.8000000000001 H364.6 M360.9,764.6 H363.1" stroke="#333" stroke-width="1" fill="none" />
<text x="280.3" y="95.5" fill="#567fcb">CENTRAL TIMER MODULE (CTM)/</text>
<text x="280.3" y="104.6" fill="#567fcb">GENERIC ELECTRONIC MODULE (GEM)</text>
<text x="280.3" y="113.6" fill="#323232">(BEHIND CENTER OF DASH)</text>
<text x="249.5" y="143.5" fill="#323232">11</text>
<text x="266" y="148.6" fill="#323232">C280</text>
<path d="M265.7,149.8 H282.3" stroke="#8a8a8a" stroke-width="1" fill="none"/>
<text x="267.2" y="163.7" fill="#323232">1032</text>
<text x="257.25" y="162" fill="#323232" text-anchor="end">WHT/</text>
<text x="257.25" y="169.8" fill="#323232" text-anchor="end">BLK</text>
<text x="283.85" y="199" fill="#323232" text-anchor="end">TAN/</text>
<text x="283.85" y="206.8" fill="#323232" text-anchor="end">WHT</text>
<text x="491.6" y="98.8" fill="#567fcb">HEADLAMP</text>
<text x="491.6" y="107" fill="#567fcb">RELAY</text>
<text x="545.6" y="91.7" fill="#323232">RELAY</text>
<text x="545.6" y="100" fill="#323232">MODULE</text>
<text x="545.6" y="109" fill="#323232">(BEHIND</text>
<text x="545.6" y="116.6" fill="#323232">CENTER</text>
<text x="545.6" y="126" fill="#323232">OF DASH)</text>
<text x="463.2" y="143.7" fill="#323232">2</text>
<text x="469.45" y="167" fill="#323232" text-anchor="end">TAN/</text>
<text x="469.45" y="174.8" fill="#323232" text-anchor="end">WHT</text>
<text x="489.1" y="180.7" fill="#323232">TAN/WHT</text>
<text x="612.6" y="87" fill="#323232" textLength="62.4">HOT AT ALL TIMES</text>
<text x="632.1" y="106.1" fill="#323232">FUSE 11</text>
<text x="632.1" y="113.9" fill="#323232">15A</text>
<text x="676.4" y="96.6" fill="#567fcb">BATTERY</text>
<text x="676.4" y="105" fill="#567fcb">JUNCTION</text>
<text x="676.4" y="113.6" fill="#567fcb">BOX</text>
<text x="621.25" y="136.9" fill="#323232" text-anchor="end">TAN/</text>
<text x="621.25" y="146" fill="#323232" text-anchor="end">WHT</text>
<text x="559.6" y="204" fill="#323232">TAN/WHT</text>
<text x="618.8" y="203" fill="#323232">TAN/WHT</text>
<text x="653" y="225.6" fill="#323232">RELAY</text>
<text x="653" y="234.7" fill="#323232">MODULE</text>
<text x="653" y="243.1" fill="#323232">(BEHIND</text>
<text x="653" y="251.6" fill="#323232">CENTER</text>
<text x="653" y="260.5" fill="#323232">OF DASH)</text>
<text x="618.6" y="252.7" fill="#567fcb">PARK</text>
<text x="618.6" y="260.9" fill="#567fcb">LAMP</text>
<text x="618.6" y="269.3" fill="#567fcb">RELAY</text>
<text x="590.4" y="244.3" fill="#323232">2</text>
<text x="592" y="291.5" fill="#323232">1</text>
<text x="254.4" y="244.2" fill="#323232">4</text>
<text x="278" y="242.5" fill="#323232">5</text>
<text x="266.1" y="292.5" fill="#323232">3</text>
<text x="255.9" y="318" fill="#323232">BRN</text>
<text x="495.5" y="308.7" fill="#323232">WHT/PPL</text>
<text x="598.85" y="322.9" fill="#323232" text-anchor="end">WHT/</text>
<text x="598.85" y="331.3" fill="#323232" text-anchor="end">PPL</text>
<text x="141.25" y="212.8" fill="#323232" text-anchor="end">WHT/</text>
<text x="141.25" y="220.6" fill="#323232" text-anchor="end">BLK</text>
<text x="135.4" y="231" fill="#323232">3</text>
<text x="196.8" y="240.9" fill="#323232">MAIN</text>
<text x="196.8" y="249.1" fill="#323232">LIGHT</text>
<text x="196.8" y="257.6" fill="#323232">SWITCH</text>
<text x="116" y="264.6" fill="#323232">OFF</text>
<text x="161.6" y="264.6" fill="#323232">HEAD</text>
<text x="129.5" y="274" fill="#323232">PARK</text>
<text x="147.6" y="299.6" fill="#323232">5</text>
<text x="152.95" y="314" fill="#323232" text-anchor="end">TAN/</text>
<text x="152.95" y="321.8" fill="#323232" text-anchor="end">WHT</text>
<text x="852.45" y="204.8" fill="#323232" text-anchor="end">TAN/WHT</text>
<text x="852.45" y="215.9" fill="#323232" text-anchor="end">BRN</text>
<text x="852.45" y="239.8" fill="#323232" text-anchor="end">RED/BLK</text>
<text x="852.45" y="252" fill="#323232" text-anchor="end">TAN/WHT</text>
<text x="852.45" y="415.6" fill="#323232" text-anchor="end">WHT/PPL</text>
<text x="852.45" y="426.7" fill="#323232" text-anchor="end">RED/BLK</text>
<text x="852.45" y="462.8" fill="#323232" text-anchor="end">RED/BLK</text>
<text x="852.45" y="473.9" fill="#323232" text-anchor="end">RED/BLK</text>
<text x="852.45" y="486.1" fill="#323232" text-anchor="end">RED/BLK</text>
<text x="865" y="210" fill="#484848">1</text>
<text x="865" y="221" fill="#484848">2</text>
<text x="865" y="244.7" fill="#484848">3</text>
<text x="865" y="256" fill="#484848">4</text>
<text x="865" y="419.6" fill="#484848">5</text>
<text x="865" y="431.3" fill="#484848">6</text>
<text x="865" y="467" fill="#484848">7</text>
<text x="865" y="478.8" fill="#484848">8</text>
<text x="865" y="490.5" fill="#484848">9</text>
<text x="797.75" y="332.8" fill="#323232" text-anchor="end">BRN</text>
<text x="797.75" y="343.9" fill="#323232" text-anchor="end">BRN</text>
<text x="797.75" y="356.5" fill="#323232" text-anchor="end">PPL/WHT</text>
<text x="716.3" y="355.8" fill="#323232">BRN</text>
<text x="817.7" y="345" fill="#323232">EXTERIOR</text>
<text x="817.7" y="353.8" fill="#323232">LIGHTS</text>
<text x="817.7" y="362" fill="#323232">SYSTEM</text>
<text x="740.7" y="371.1" fill="#323232">S244</text>
<text x="740.7" y="378.4" fill="#323232">(NEAR BREAKOUT</text>
<text x="740.7" y="386.9" fill="#323232">TO RELAY</text>
<text x="740.7" y="394.9" fill="#323232">MODULE)</text>
<text x="239.9" y="388.8" fill="#323232">W/ AUTOLAMPS</text>
<text x="259.75" y="407.6" fill="#567fcb" text-anchor="end">DAY/NIGHT</text>
<text x="259.75" y="416.5" fill="#567fcb" text-anchor="end">MIRROR/</text>
<text x="259.75" y="424.9" fill="#567fcb" text-anchor="end">AUTOLAMP</text>
<text x="261.55" y="433.8" fill="#567fcb" text-anchor="end">SENSOR</text>
<text x="300.75" y="416.5" fill="#323232" text-anchor="end">RELAY</text>
<text x="300.75" y="424.9" fill="#323232" text-anchor="end">CTRL</text>
<text x="310.7" y="414.7" fill="#323232">2</text>
<text x="324.5" y="414.7" fill="#323232">WHT/PPL</text>
<text x="394.8" y="396.5" fill="#323232">(NEAR LEFT</text>
<text x="394.8" y="406.2" fill="#323232">KICK PANEL)</text>
<text x="394.8" y="413.8" fill="#323232">S267</text>
<text x="459.7" y="413.8" fill="#323232">WHT/PPL</text>
<text x="507.3" y="419.1" fill="#323232">ANTI-THEFT</text>
<text x="507.3" y="427.6" fill="#323232">SYSTEM</text>
<text x="223.7" y="502.9" fill="#323232">W/O EATC</text>
<text x="303" y="506" fill="#323232">W/O HIGH</text>
<text x="336.35" y="514.8" fill="#323232" text-anchor="end">SERIES</text>
<text x="304.5" y="522.8" fill="#323232">CONSOLE</text>
<text x="598.45" y="453.8" fill="#323232" text-anchor="end">RED/</text>
<text x="598.45" y="462.5" fill="#323232" text-anchor="end">BLK</text>
<text x="692.45" y="453.8" fill="#323232" text-anchor="end">RED/</text>
<text x="692.45" y="462.5" fill="#323232" text-anchor="end">BLK</text>
<text x="604.9" y="495.7" fill="#323232">S264</text>
<text x="604.9" y="503.4" fill="#323232">(NEAR</text>
<text x="604.9" y="512.3" fill="#323232">INSTRUMENT CLUSTER</text>
<text x="604.9" y="520.3" fill="#323232">BREAKOUT)</text>
<text x="551.1" y="514.7" fill="#323232">W/ EATC</text>
<text x="59.05" y="536.6" fill="#323232" text-anchor="end">RED/</text>
<text x="59.05" y="544.5" fill="#323232" text-anchor="end">BLK</text>
<text x="129.25" y="536.6" fill="#323232" text-anchor="end">RED/</text>
<text x="129.25" y="544.5" fill="#323232" text-anchor="end">BLK</text>
<text x="199.75" y="536.6" fill="#323232" text-anchor="end">RED/</text>
<text x="199.75" y="544.5" fill="#323232" text-anchor="end">BLK</text>
<text x="276.05" y="536.6" fill="#323232" text-anchor="end">RED/</text>
<text x="276.05" y="544.5" fill="#323232" text-anchor="end">BLK</text>
<text x="357.95" y="536.6" fill="#323232" text-anchor="end">RED/</text>
<text x="357.95" y="544.5" fill="#323232" text-anchor="end">BLK</text>
<text x="434.05" y="536.6" fill="#323232" text-anchor="end">RED/</text>
<text x="434.05" y="544.5" fill="#323232" text-anchor="end">BLK</text>
<text x="481.45" y="536.6" fill="#323232" text-anchor="end">RED/</text>
<text x="481.45" y="544.5" fill="#323232" text-anchor="end">BLK</text>
<text x="506.45" y="536.6" fill="#323232" text-anchor="end">RED/</text>
<text x="506.45" y="544.5" fill="#323232" text-anchor="end">BLK</text>
<text x="598.45" y="536.6" fill="#323232" text-anchor="end">RED/</text>
<text x="598.45" y="544.5" fill="#323232" text-anchor="end">BLK</text>
<text x="709.65" y="536.6" fill="#323232" text-anchor="end">RED/</text>
<text x="709.65" y="544.5" fill="#323232" text-anchor="end">BLK</text>
<text x="780.15" y="536.6" fill="#323232" text-anchor="end">RED/</text>
<text x="780.15" y="544.5" fill="#323232" text-anchor="end">BLK</text>
<text x="850.55" y="536.6" fill="#323232" text-anchor="end">RED/</text>
<text x="850.55" y="544.5" fill="#323232" text-anchor="end">BLK</text>
<text x="56.1" y="554.7" fill="#323232">5</text>
<text x="126.3" y="554.7" fill="#323232">5</text>
<text x="196.8" y="554.7" fill="#323232">6</text>
<text x="272.6" y="554.8" fill="#323232">2</text>
<text x="500.2" y="554.8" fill="#323232">1</text>
<text x="592" y="555.5" fill="#323232">14</text>
<text x="706.6" y="555.6" fill="#323232">8</text>
<text x="776.8" y="555.6" fill="#323232">4</text>
<text x="285.2" y="559" fill="#323232">C276</text>
<path d="M284.9,560.2 H301.5" stroke="#8a8a8a" stroke-width="1" fill="none"/>
<text x="606" y="555.5" fill="#323232">C298</text>
<path d="M605.7,556.7 H622.3" stroke="#c4c4c4" stroke-width="1" fill="none"/>
<text x="717.2" y="555.6" fill="#323232">C286</text>
<path d="M716.9,556.8 H733.5" stroke="#c4c4c4" stroke-width="1" fill="none"/>
<text x="787.8" y="555.6" fill="#323232">C287</text>
<path d="M787.5,556.8 H804.1" stroke="#c4c4c4" stroke-width="1" fill="none"/>
<text x="80.9" y="568.7" fill="#567fcb">HEATED</text>
<text x="80.9" y="576.8" fill="#567fcb">REAR</text>
<text x="80.9" y="585.8" fill="#567fcb">WINDOW</text>
<text x="80.9" y="593.9" fill="#567fcb">SWITCH</text>
<text x="151.2" y="568.7" fill="#567fcb">FOG</text>
<text x="151.2" y="576.8" fill="#567fcb">LAMP</text>
<text x="151.2" y="585.8" fill="#567fcb">SWITCH</text>
<text x="221.5" y="568.7" fill="#567fcb">LIFTGATE</text>
<text x="221.5" y="576.8" fill="#567fcb">WIPER/</text>
<text x="221.5" y="585.8" fill="#567fcb">WASHER</text>
<text x="221.5" y="593.9" fill="#567fcb">SWITCH</text>
<text x="297.9" y="568.7" fill="#323232">FUNCTION</text>
<text x="297.9" y="576.8" fill="#323232">SELECTOR</text>
<text x="297.9" y="585.8" fill="#323232">SWITCH</text>
<text x="297.9" y="593.9" fill="#323232">ASSEMBLY</text>
<text x="379.8" y="568.7" fill="#567fcb">ASHTRAY</text>
<text x="379.8" y="576.8" fill="#567fcb">ILLUM-</text>
<text x="379.8" y="585.8" fill="#567fcb">INATION</text>
<text x="452.6" y="567.6" fill="#323232">4WD</text>
<text x="452.6" y="576.5" fill="#323232">MODE</text>
<text x="452.6" y="584.9" fill="#323232">SWITCH</text>
<text x="526.1" y="568.7" fill="#567fcb">PARKING</text>
<text x="526.1" y="576.8" fill="#567fcb">AID</text>
<text x="526.1" y="585.8" fill="#567fcb">DISABLE</text>
<text x="526.1" y="593.9" fill="#567fcb">SWITCH</text>
<text x="578.1" y="572.6" fill="#323232">FRONT PANEL</text>
<text x="578.1" y="581.6" fill="#323232">ILLUMINATION</text>
<text x="594.7" y="607.6" fill="#323232">GND</text>
<text x="637" y="568.8" fill="#567fcb">ELECTRONIC</text>
<text x="637" y="577.2" fill="#567fcb">AUTOMATIC</text>
<text x="637" y="586.3" fill="#567fcb">TEMPERATURE</text>
<text x="637" y="593.8" fill="#567fcb">CONTROL</text>
<text x="637" y="602.7" fill="#567fcb">(EATC)</text>
<text x="637" y="611.3" fill="#567fcb">MODULE</text>
<text x="724.7" y="580" fill="#567fcb">ILLUMINATION</text>
<text x="801.1" y="567.8" fill="#567fcb">INSTRUMENT</text>
<text x="801.1" y="576.7" fill="#567fcb">CLUSTER</text>
<text x="727.8" y="601" fill="#323232">(3)</text>
<text x="761" y="598.2" fill="#323232">(3)</text>
<text x="56.1" y="625" fill="#323232">4</text>
<text x="59.05" y="635.7" fill="#323232" text-anchor="end">BLK</text>
<text x="126.3" y="625" fill="#323232">4</text>
<text x="129.25" y="635.7" fill="#323232" text-anchor="end">BLK</text>
<text x="196.6" y="614.3" fill="#323232">3</text>
<text x="199.75" y="625.3" fill="#323232" text-anchor="end">BLK</text>
<text x="273.8" y="613.5" fill="#323232">1</text>
<text x="285.7" y="614.8" fill="#323232">C276</text>
<path d="M285.4,616.0 H302.0" stroke="#8a8a8a" stroke-width="1" fill="none"/>
<text x="276.25" y="624.5" fill="#323232" text-anchor="end">BLK</text>
<text x="357.95" y="624.5" fill="#323232" text-anchor="end">BLK</text>
<text x="434.25" y="624.5" fill="#323232" text-anchor="end">BLK</text>
<text x="501.7" y="625.6" fill="#323232">5</text>
<text x="504.65" y="635.6" fill="#323232" text-anchor="end">BLK</text>
<text x="594.3" y="624.8" fill="#323232">3</text>
<text x="606" y="620.9" fill="#323232">C297</text>
<path d="M605.7,622.1 H622.3" stroke="#c4c4c4" stroke-width="1" fill="none"/>
<text x="598.25" y="660.7" fill="#323232" text-anchor="end">BLK</text>
<text x="705.8" y="639" fill="#323232">7</text>
<text x="717.2" y="638.5" fill="#323232">C286</text>
<path d="M716.9,639.7 H733.5" stroke="#c4c4c4" stroke-width="1" fill="none"/>
<text x="709.85" y="660.6" fill="#323232" text-anchor="end">BLK</text>
<text x="776.2" y="639" fill="#323232">7</text>
<text x="787.8" y="638.5" fill="#323232">C287</text>
<path d="M787.5,639.7 H804.1" stroke="#c4c4c4" stroke-width="1" fill="none"/>
<text x="780.05" y="660.6" fill="#323232" text-anchor="end">BLK</text>
<text x="137.4" y="660.5" fill="#323232">S229</text>
<text x="130.15" y="741.8" fill="#323232" text-anchor="end">BLK</text>
<text x="143" y="762.2" fill="#323232">G104</text>
<text x="357.95" y="699.8" fill="#323232" text-anchor="end">BLK</text>
<text x="365.4" y="731.8" fill="#323232">S200</text>
<text x="357.95" y="738.6" fill="#323232" text-anchor="end">BLK</text>
<text x="371.1" y="761.8" fill="#323232">G104</text>
<text x="143" y="771.4" fill="#323232">(REAR OF</text>
<text x="371.1" y="771.0" fill="#323232">(REAR OF</text>
</svg></div>
</body></html>
